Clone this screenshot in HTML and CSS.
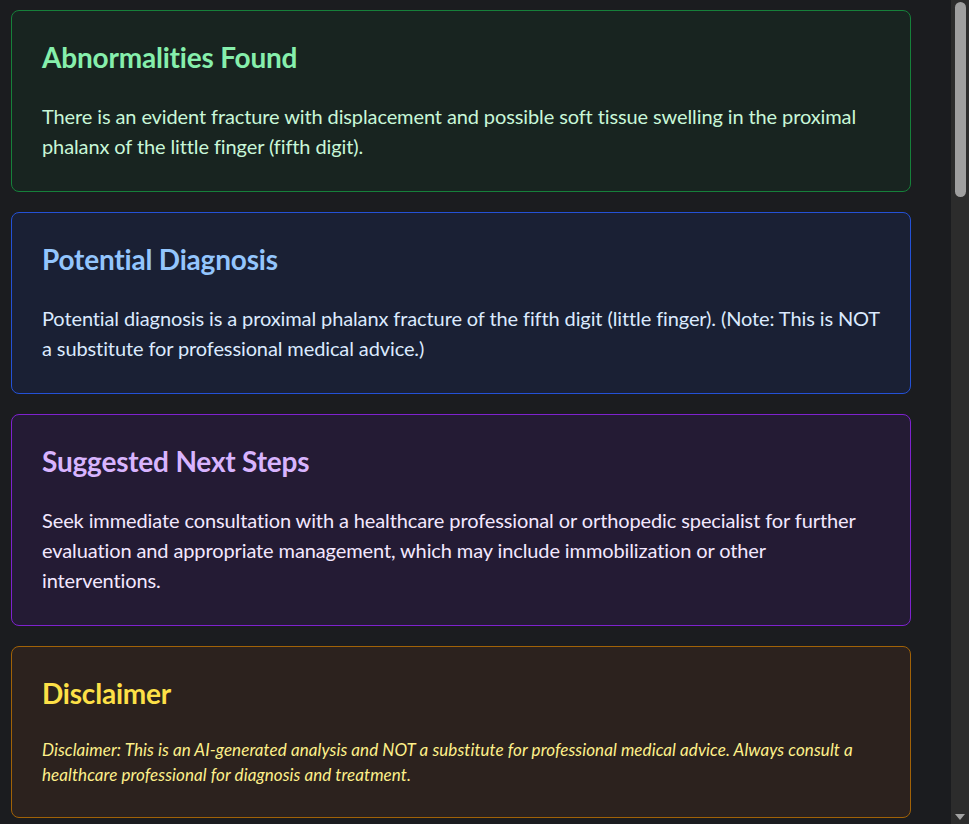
FILE: index.html
```html
<!DOCTYPE html>
<html lang="en">
<head>
<meta charset="utf-8">
<title>Analysis</title>
<link rel="stylesheet" href="styles.css">
</head>
<body>
<main class="results">
  <section class="card card-green">
    <h2 class="card-title">Abnormalities Found</h2>
    <p class="card-text">There is an evident fracture with displacement and possible soft tissue swelling in the proximal phalanx of the little finger (fifth digit).</p>
  </section>
  <section class="card card-blue">
    <h2 class="card-title">Potential Diagnosis</h2>
    <p class="card-text">Potential diagnosis is a proximal phalanx fracture of the fifth digit (little finger). (Note: This is NOT a substitute for professional medical advice.)</p>
  </section>
  <section class="card card-purple">
    <h2 class="card-title">Suggested Next Steps</h2>
    <p class="card-text">Seek immediate consultation with a healthcare professional or orthopedic specialist for further evaluation and appropriate management, which may include immobilization or other interventions.</p>
  </section>
  <section class="card card-yellow">
    <h2 class="card-title">Disclaimer</h2>
    <p class="card-text card-note">Disclaimer: This is an AI-generated analysis and NOT a substitute for professional medical advice. Always consult a healthcare professional for diagnosis and treatment.</p>
  </section>
</main>
<div class="scrollbar" aria-hidden="true">
  <div class="scroll-thumb"></div>
  <div class="scroll-arrow"></div>
</div>
</body>
</html>
```

FILE: styles.css
```css
html {
  color-scheme: dark;
  background: #1b1c1f;
}
body {
  margin: 0;
  background: #1b1c1f;
  font-family: Lato, "Open Sans", sans-serif;
  min-height: 3500px;
}
.results {
  display: flex;
  flex-direction: column;
  gap: 20px;
  padding: 10px 11px;
  width: 900px;
}
.card {
  border: 1px solid;
  border-radius: 8px;
  padding: 28px 30px 30px;
}
.card-title {
  margin: 0 0 26px;
  font-size: 28px;
  line-height: 36px;
  font-weight: 700;
  letter-spacing: -0.2px;
}
.card-text {
  margin: 0;
  font-size: 20px;
  line-height: 30px;
  letter-spacing: -0.11px;
}
.card-note {
  font-size: 17px;
  line-height: 25px;
  font-style: italic;
  letter-spacing: 0.08px;
}
.card-green { background: #182420; border-color: #16803a; }
.card-green .card-title { color: #86efac; }
.card-green .card-text { color: #c8f7d8; }
.card-blue { background: #1a2034; border-color: #2451d6; }
.card-blue .card-title { color: #93c5fd; }
.card-blue .card-text { color: #dbeafe; }
.card-purple { background: #241b34; border-color: #7e22ce; }
.card-purple .card-title { color: #d8b4fe; }
.card-purple .card-text { color: #f3e8ff; }
.card-yellow { background: #2c221e; border-color: #a16207; }
.card-yellow .card-title { color: #fde047; }
.card-yellow .card-text { color: #fef08a; }

.scrollbar {
  position: fixed;
  top: 0;
  right: 0;
  width: 18px;
  height: 100vh;
  background: #2c2c2c;
  display: flex;
  flex-direction: column;
  align-items: center;
  justify-content: space-between;
  padding: 2px 0 4px;
  box-sizing: border-box;
}
.scroll-thumb {
  width: 11px;
  height: 195px;
  border-radius: 6px;
  background: #9f9f9f;
}
.scroll-arrow {
  width: 0;
  height: 0;
  border-left: 5px solid transparent;
  border-right: 5px solid transparent;
  border-top: 6px solid #a3a3a3;
}
```
